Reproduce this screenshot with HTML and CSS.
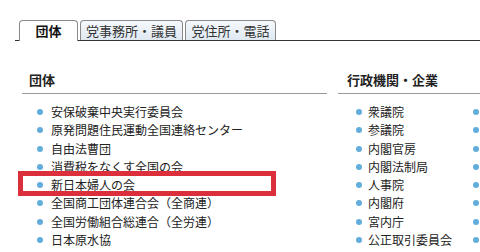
FILE: index.html
```html
<!DOCTYPE html>
<html lang="ja">
<head>
<meta charset="utf-8">
<link rel="stylesheet" href="styles.css">
</head>
<body>
<div class="page">
  <div class="tabs">
    <div class="tab active">団体</div>
    <div class="tab tab-office">党事務所・議員</div>
    <div class="tab tab-address">党住所・電話</div>
  </div>
  <div class="content">
    <section class="col left">
      <h2 class="head">団体</h2>
      <ul class="list">
        <li>安保破棄中央実行委員会</li>
        <li>原発問題住民運動全国連絡センター</li>
        <li>自由法曹団</li>
        <li>消費税をなくす全国の会</li>
        <li>新日本婦人の会</li>
        <li>全国商工団体連合会（全商連）</li>
        <li>全国労働組合総連合（全労連）</li>
        <li>日本原水協</li>
        <li>日本国民救援会</li>
      </ul>
    </section>
    <section class="col right">
      <h2 class="head">行政機関・企業</h2>
      <div class="cols">
        <ul class="list">
          <li>衆議院</li>
          <li>参議院</li>
          <li>内閣官房</li>
          <li>内閣法制局</li>
          <li>人事院</li>
          <li>内閣府</li>
          <li>宮内庁</li>
          <li>公正取引委員会</li>
          <li>国家公安委員会</li>
        </ul>
        <ul class="list">
          <li>警察庁</li>
          <li>金融庁</li>
          <li>消費者庁</li>
          <li>総務省</li>
          <li>法務省</li>
          <li>外務省</li>
          <li>財務省</li>
          <li>文部科学省</li>
          <li>厚生労働省</li>
        </ul>
      </div>
    </section>
  </div>
  <div class="highlight"></div>
</div>
</body>
</html>
```

FILE: styles.css
```css
html, body {
  margin: 0;
  padding: 0;
  background: #fff;
  overflow: hidden;
}
body {
  font-family: "Noto Sans CJK JP", "Noto Sans", sans-serif;
  color: #222;
  width: 480px;
  height: 252px;
}
.page {
  position: relative;
  width: 480px;
  height: 252px;
  overflow: hidden;
}
.tabs {
  display: flex;
  gap: 2px;
  margin: 20px 0 0 15px;
  padding-left: 4px;
  border-bottom: 1px solid #333;
  height: 20px;
  align-items: flex-end;
}
.tab {
  box-sizing: border-box;
  height: 20px;
  padding: 0;
  font-size: 13px;
  line-height: 19px;
  text-align: center;
  border: 1px solid #8a8a8a;
  border-bottom: none;
  border-radius: 4px 4px 0 0;
  background: linear-gradient(#f6f9fc, #dfe8f1);
  color: #333;
  white-space: nowrap;
}
.tab-office {
  width: 103px;
}
.tab-address {
  width: 91px;
}
.tab.active {
  width: 59px;
  font-weight: bold;
  background: #fff;
  height: 21px;
  margin-bottom: -1px;
  color: #111;
}
.content {
  display: flex;
  gap: 11px;
  margin-left: 22px;
  padding-top: 28px;
}
.col.left {
  width: 305px;
  flex: none;
}
.col.right {
  width: 300px;
  flex: none;
}
.head {
  margin: 0;
  font-size: 13px;
  font-weight: bold;
  line-height: 22px;
  padding: 0 0 2px 7px;
  border-bottom: 1px solid #9a9a9a;
  color: #222;
}
.col.right .head {
  padding-left: 9px;
}
.cols {
  display: grid;
  grid-template-columns: 117px 117px;
}
.list {
  list-style: none;
  margin: 0;
  padding: 9px 0 0 0;
}
.list li {
  position: relative;
  font-size: 12px;
  line-height: 18.3px;
  padding-left: 29px;
  white-space: nowrap;
  color: #222;
}
.list li::before {
  content: "";
  position: absolute;
  left: 15px;
  top: 6px;
  width: 6px;
  height: 6px;
  border-radius: 50%;
  background: #62addb;
}
.col.right .list li {
  padding-left: 30px;
}
.col.right .list li::before {
  left: 18px;
}
.highlight {
  position: absolute;
  left: 18px;
  top: 171px;
  width: 258px;
  height: 25px;
  box-sizing: border-box;
  border: 5px solid #dc2f3c;
}
```
